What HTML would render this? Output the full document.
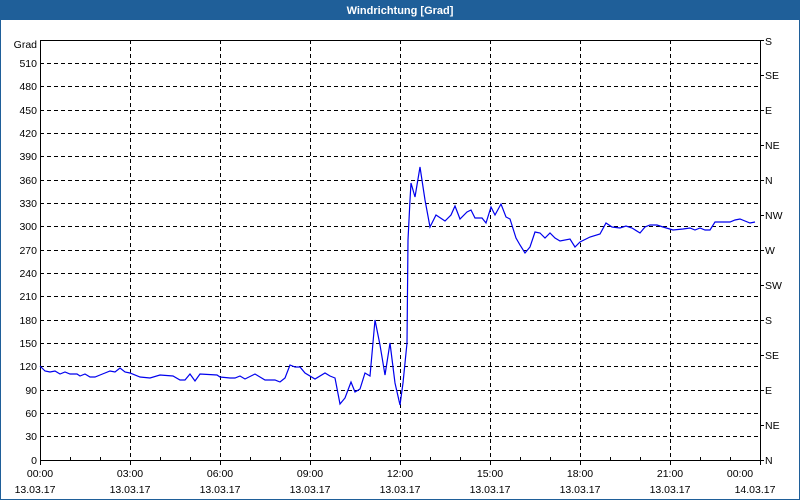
<!DOCTYPE html>
<html><head><style>
html,body{margin:0;padding:0;background:#fff;}
svg{display:block;font-family:"Liberation Sans",Arial,sans-serif;}
</style></head><body>
<svg width="800" height="500" xmlns="http://www.w3.org/2000/svg">
<rect x="0" y="0" width="800" height="500" fill="#fff"/>
<rect x="0" y="0" width="800" height="20" fill="#1f5f99"/>
<rect x="0" y="0" width="1" height="500" fill="#1f5f99"/>
<rect x="799" y="0" width="1" height="500" fill="#1f5f99"/>
<rect x="0" y="499" width="800" height="1" fill="#1f5f99"/>
<text x="400" y="14" fill="#fff" font-size="11" font-weight="bold" text-anchor="middle">Windrichtung [Grad]</text>
<g stroke="#000" stroke-width="1" stroke-dasharray="4,3" fill="none" shape-rendering="crispEdges">
<path d="M40 63.5H760M40 86.5H760M40 110.5H760M40 133.5H760M40 156.5H760M40 180.5H760M40 203.5H760M40 226.5H760M40 250.5H760M40 273.5H760M40 296.5H760M40 320.5H760M40 343.5H760M40 366.5H760M40 390.5H760M40 413.5H760M40 436.5H760"/>
<path d="M130.5 40V460M220.5 40V460M310.5 40V460M400.5 40V460M490.5 40V460M580.5 40V460M670.5 40V460"/>
</g>
<g stroke="#000" stroke-width="1" fill="none" shape-rendering="crispEdges">
<rect x="40.5" y="40.5" width="720" height="420"/>
<path d="M70.5 460v-3M100.5 460v-3M160.5 460v-3M190.5 460v-3M250.5 460v-3M280.5 460v-3M340.5 460v-3M370.5 460v-3M430.5 460v-3M460.5 460v-3M520.5 460v-3M550.5 460v-3M610.5 460v-3M640.5 460v-3M700.5 460v-3M730.5 460v-3"/>
<path d="M130.5 460v5M220.5 460v5M310.5 460v5M400.5 460v5M490.5 460v5M580.5 460v5M670.5 460v5M40.5 460v5M760.5 460v5"/>
<path d="M760 40.5h4M760 75.5h4M760 110.5h4M760 145.5h4M760 180.5h4M760 215.5h4M760 250.5h4M760 285.5h4M760 320.5h4M760 355.5h4M760 390.5h4M760 425.5h4M760 460.5h4"/>
</g>
<polyline fill="none" stroke="#0000ee" stroke-width="1.2" points="40,366 45,371 50,372 55,371 60,374 65,372 70,374 77,374 80,376 85,374 90,377 95,377 100,375 105,373 110,371 115,372 120,368 125,372 130,373 140,377 150,378 160,375 173,376 180,380 185,380 190,374 195,381 200,374 217,375 220,377 230,378 235,378 240,376 245,379 255,374 265,380 275,380 280,382 285,378 290,365 295,367 300,367 305,373 315,379 325,373 330,376 335,378 340,404 345,398 351,382 355,392 360,389 365,373 370,376 375,320 380,345 385,375 390,343 395,383 400,405 403,383 407,343 408,240 410,200 411,183 415,197 420,167 425,200 430,227 436,215 445,221 451,215 455,206 460,219 467,212 471,210 475,218 482,218 486,223 491,207 495,215 501,204 506,217 510,219 516,238 520,245 525,253 530,247 535,232 540,233 545,238 550,233 555,238 560,241 570,239 575,247 580,242 590,237 600,234 606,223 612,227 620,228 626,226 632,228 640,233 645,227 650,225 657,225 663,227 673,230 683,229 690,228 695,230 700,228 705,230 710,230 715,222 720,222 725,222 730,222 735,220 740,219 745,221 750,223 755,222"/>
<g font-size="10.5" fill="#000" text-anchor="end">
<text x="37" y="48">Grad</text>
<text x="37" y="67">510</text><text x="37" y="90">480</text><text x="37" y="114">450</text><text x="37" y="137">420</text><text x="37" y="160">390</text><text x="37" y="184">360</text><text x="37" y="207">330</text><text x="37" y="230">300</text><text x="37" y="254">270</text><text x="37" y="277">240</text><text x="37" y="300">210</text><text x="37" y="324">180</text><text x="37" y="347">150</text><text x="37" y="370">120</text><text x="37" y="394">90</text><text x="37" y="417">60</text><text x="37" y="440">30</text><text x="37" y="464">0</text>
</g>
<g font-size="10.5" fill="#000">
<text x="765" y="45">S</text><text x="765" y="79">SE</text><text x="765" y="114">E</text><text x="765" y="149">NE</text><text x="765" y="184">N</text><text x="765" y="219">NW</text><text x="765" y="254">W</text><text x="765" y="289">SW</text><text x="765" y="324">S</text><text x="765" y="359">SE</text><text x="765" y="394">E</text><text x="765" y="429">NE</text><text x="765" y="464">N</text>
</g>
<g font-size="10.5" fill="#000" text-anchor="middle">
<text x="40" y="477">00:00</text><text x="130" y="477">03:00</text><text x="220" y="477">06:00</text><text x="310" y="477">09:00</text><text x="400" y="477">12:00</text><text x="490" y="477">15:00</text><text x="580" y="477">18:00</text><text x="670" y="477">21:00</text><text x="740" y="477">00:00</text>
<text x="35" y="493">13.03.17</text><text x="130" y="493">13.03.17</text><text x="220" y="493">13.03.17</text><text x="310" y="493">13.03.17</text><text x="400" y="493">13.03.17</text><text x="490" y="493">13.03.17</text><text x="580" y="493">13.03.17</text><text x="670" y="493">13.03.17</text><text x="755" y="493">14.03.17</text>
</g>
</svg>
</body></html>
